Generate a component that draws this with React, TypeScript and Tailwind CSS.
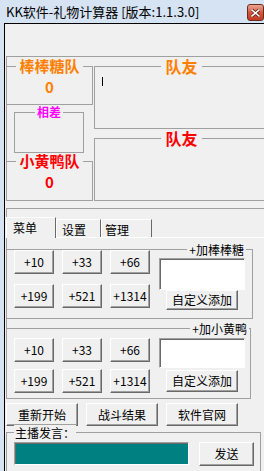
const btn =
  "flex items-center justify-center bg-[#f0f0f0] border border-t-white border-l-white border-r-[#696969] border-b-[#696969] shadow-[inset_-1px_-1px_0_#a0a0a0] text-[12px] leading-none text-black";
const sunken =
  "border border-t-[#a0a0a0] border-l-[#a0a0a0] border-r-white border-b-white shadow-[inset_1px_1px_0_#696969]";

function AddGroup({ label, labelRight, pt, inputH, addH, addMt, h, w }: {
  label: string; labelRight: string; pt: string; inputH: string; addH: string; addMt: string; h: string; w: string;
}) {
  const amounts = ["+10", "+33", "+66", "+199", "+521", "+1314"];
  return (
    <div className={`relative -ml-px border border-[#a0a0a0] ${h} ${w} ${pt}`}>
      <span className={`absolute ${labelRight} top-[-8px] h-[15px] bg-[#f0f0f0] px-[2px] text-[12px] leading-[15px] text-black`}>
        {label}
      </span>
      <div className="flex pl-[7px]">
        <div className="grid grid-cols-[40px_40px_40px] gap-x-[8px] gap-y-[7px]">
          {amounts.map((a) => (
            <button key={a} className={`${btn} h-[24px] w-[40px]`}>{a}</button>
          ))}
        </div>
        <div className="ml-[9px] flex flex-col">
          <div className={`${sunken} ${inputH} w-[86px] bg-white ${pt === "pt-0" ? "mt-[8px]" : ""}`} />
          <button className={`${btn} ${addH} ${addMt} ml-[7px] w-[72px]`}>自定义添加</button>
        </div>
      </div>
    </div>
  );
}

export default function App() {
  return (
    <div className="h-[471px] w-[264px] overflow-hidden bg-[#d5e3f3] font-['Noto_Sans_CJK_SC',sans-serif]">
      {/* title bar */}
      <div className="flex h-[23px] items-start justify-between">
        <span className="mt-[4px] pl-[6px] text-[13px] leading-[16px] text-black">KK软件-礼物计算器 [版本:1.1.3.0]</span>
        <div className="mt-[4px] flex h-[17px] w-[17px] items-center justify-center rounded-[3px] border border-[#6b2a1e] bg-gradient-to-b from-[#e9a792] via-[#d4573d] to-[#c03a22]">
          <svg width="9" height="8" viewBox="0 0 9 8">
            <path d="M1 1 L8 7 M8 1 L1 7" stroke="#5a1a10" strokeWidth="3" strokeLinecap="square" />
            <path d="M1 1 L8 7 M8 1 L1 7" stroke="#ffffff" strokeWidth="1.6" strokeLinecap="square" />
          </svg>
        </div>
      </div>

      <div className="flex">
        <div className="w-[4px] shrink-0" />
        <div className="h-[448px] flex-1 border-l border-t border-black bg-[#f0f0f0] text-[12px] text-black">
          <div className="h-[32px]" />

          {/* score area */}
          <div className="ml-px flex border-l border-t border-[#a0a0a0] pt-[9px]">
            <div className="-ml-px flex w-[87px] shrink-0 flex-col">
              <div className="relative flex h-[39px] justify-center border border-[#a0a0a0]">
                <span className="absolute top-[-9px] h-[16px] bg-[#f0f0f0] px-[3px] text-[15px] font-bold leading-[16px] text-[#ff8000]">棒棒糖队</span>
                <span className="mt-[12px] text-[15px] font-bold leading-[16px] text-[#ff8000]">0</span>
              </div>
              <div className="relative ml-[8px] mt-[7px] flex h-[41px] w-[70px] justify-center border border-[#a0a0a0]">
                <span className="absolute top-[-8px] h-[14px] bg-[#f0f0f0] px-[2px] text-[12px] font-bold leading-[14px] text-[#ff00ff]">相差</span>
              </div>
              <div className="relative mt-[8px] flex h-[40px] justify-center border border-[#a0a0a0]">
                <span className="absolute top-[-9px] h-[16px] bg-[#f0f0f0] px-[3px] text-[15px] font-bold leading-[16px] text-[#ff0000]">小黄鸭队</span>
                <span className="mt-[12px] text-[15px] font-bold leading-[16px] text-[#ff0000]">0</span>
              </div>
            </div>
            <div className="ml-px flex shrink-0 flex-col">
              <div className="relative flex h-[63px] w-[175px] justify-center border border-[#a0a0a0]">
                <span className="absolute top-[-9px] h-[17px] bg-[#f0f0f0] px-[4px] text-[16px] font-bold leading-[17px] text-[#ff8000]">队友</span>
                <div className="absolute left-[7px] top-[10px] h-[9px] w-px bg-black" />
              </div>
              <div className="relative mt-[9px] flex h-[63px] w-[175px] justify-center border border-[#a0a0a0]">
                <span className="absolute top-[-9px] h-[17px] bg-[#f0f0f0] px-[4px] text-[16px] font-bold leading-[17px] text-[#ff0000]">队友</span>
              </div>
            </div>
          </div>

          {/* tabs */}
          <div className="ml-px mt-[7px] border-l border-t border-[#a0a0a0] pt-[8px]">
            <div className="-ml-px flex h-[20px] items-end">
              <div className="relative z-10 -mb-px flex h-[21px] w-[50px] items-center border-l border-r border-t border-l-white border-r-[#696969] border-t-white bg-[#f0f0f0] pl-[6px] text-[12px] leading-none">菜单</div>
              <div className="flex h-[18px] w-[45px] items-center border-l border-r border-t border-l-white border-r-[#696969] border-t-white pl-[5px] pt-[3px] text-[12px] leading-none">设置</div>
              <div className="flex h-[18px] w-[51px] items-center border-l border-r border-t border-l-white border-r-[#696969] border-t-white pl-[3px] pt-[3px] text-[12px] leading-none">管理</div>
            </div>
            <div className="-ml-px border-l border-t border-l-[#a0a0a0] border-t-white pt-[11px]">
              <AddGroup label="+加棒棒糖" labelRight="right-[6px]" pt="pt-0" inputH="h-[32px]" addH="h-[20px]" addMt="mt-0" h="h-[70px]" w="w-[247px]" />
              <div className="mt-[9px]">
                <AddGroup label="+加小黄鸭" labelRight="right-[1px]" pt="pt-[9px]" inputH="h-[30px]" addH="h-[22px]" addMt="mt-[2px]" h="h-[71px]" w="w-[245px]" />
              </div>
            </div>
          </div>

          {/* bottom buttons */}
          <div className="ml-px mt-[4px] flex gap-[8px]">
            <button className={`${btn} h-[23px] w-[72px]`}>重新开始</button>
            <button className={`${btn} h-[23px] w-[72px]`}>战斗结果</button>
            <button className={`${btn} h-[23px] w-[72px]`}>软件官网</button>
          </div>

          {/* anchor message */}
          <div className="relative ml-px mt-[6px] flex h-[50px] w-[255px] border border-[#a0a0a0] pt-[9px]">
            <span className="absolute left-[7px] top-[-8px] h-[15px] bg-[#f0f0f0] px-px text-[12px] leading-[15px]">主播发言：</span>
            <div className={`${sunken} ml-[7px] h-[23px] w-[175px] bg-[#008080]`} />
            <button className={`${btn} ml-[10px] h-[24px] w-[55px]`}>发送</button>
          </div>
        </div>
      </div>
    </div>
  );
}
